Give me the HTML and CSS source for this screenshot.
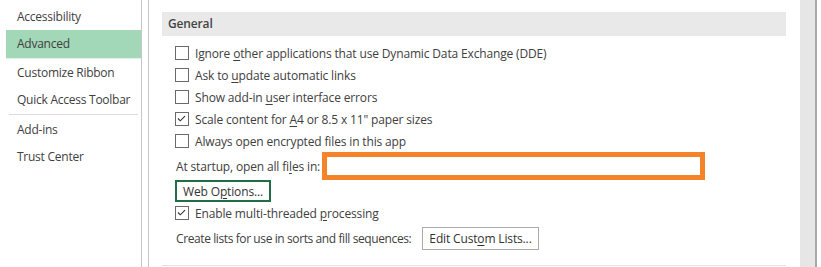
FILE: index.html
```html
<!DOCTYPE html>
<html lang="en">
<head>
<meta charset="utf-8">
<title>Excel Options - Advanced</title>
<link rel="stylesheet" href="styles.css">
</head>
<body>
<div class="window">
  <nav class="nav">
    <div class="nav-item">Accessibility</div>
    <div class="nav-item active">Advanced</div>
    <div class="nav-item">Customize Ribbon</div>
    <div class="nav-item">Quick Access Toolbar</div>
    <div class="nav-sep"></div>
    <div class="nav-item">Add-ins</div>
    <div class="nav-item">Trust Center</div>
  </nav>
  <main class="main">
    <div class="section-head">General</div>
    <div class="opts">
      <label class="row"><span class="cb"></span><span>Ignore <u>o</u>ther applications that use Dynamic Data Exchange (DDE)</span></label>
      <label class="row"><span class="cb"></span><span>Ask to <u>u</u>pdate automatic links</span></label>
      <label class="row"><span class="cb"></span><span>Show add-in <u>u</u>ser interface errors</span></label>
      <label class="row"><span class="cb checked"><svg viewBox="0 0 13 13" width="13" height="13"><path d="M3 6.5 L5.3 8.8 L10 4.1" fill="none" stroke="#333" stroke-width="1.1"/></svg></span><span>Scale content for <u>A</u>4 or 8.5 x 11" paper sizes</span></label>
      <label class="row"><span class="cb"></span><span>Always open encrypted files in this app</span></label>
      <div class="row startup"><span class="startup-label">At startup, open all fi<u>l</u>es in:</span><span class="path-box"></span></div>
      <div class="row btn-row"><button class="btn btn-focus">Web O<u>p</u>tions...</button></div>
      <label class="row"><span class="cb checked"><svg viewBox="0 0 13 13" width="13" height="13"><path d="M3 6.5 L5.3 8.8 L10 4.1" fill="none" stroke="#333" stroke-width="1.1"/></svg></span><span>Enable multi-threaded <u>p</u>rocessing</span></label>
      <div class="row lists"><span class="lists-label">Create lists for use in sorts and fill sequences:</span><button class="btn btn-plain">Edit Cust<u>o</u>m Lists...</button></div>
    </div>
    <div class="section-end"></div>
  </main>
  <div class="scrollbar"></div>
</div>
</body>
</html>
```
FILE: styles.css
```css
html, body {
  margin: 0;
  padding: 0;
  background: #ffffff;
}
body {
  font-family: "Open Sans", "Noto Sans", "Liberation Sans", sans-serif;
  font-size: 12px;
  letter-spacing: -0.15px;
  color: #404040;
}
.window {
  display: flex;
  height: 267px;
  overflow: hidden;
}
.nav {
  width: 141px;
  flex: none;
  border-right: 1px solid #c6c6c6;
  padding-top: 3px;
  box-sizing: content-box;
  letter-spacing: -0.25px;
}
.nav-item {
  height: 27px;
  line-height: 27px;
  padding-left: 17px;
  white-space: nowrap;
}
.nav-item.active {
  margin-left: 6px;
  padding-left: 11px;
  height: 28px;
  line-height: 28px;
  background: #a2d7b7;
  border-bottom: 1px solid #e4efe8;
}
.nav-sep {
  height: 1px;
  background: #dcdcdc;
  margin: 1px 3px 1px 9px;
}
.main {
  flex: none;
  width: 624px;
  margin-left: 6px;
  border-left: 1px solid #c6c6c6;
  padding: 12px 14px 0 13px;
}
.section-head {
  height: 24px;
  line-height: 23px;
  background: #e9e9e9;
  padding-left: 6px;
  font-weight: 600;
  color: #444444;
}
.opts {
  display: flex;
  flex-direction: column;
  padding-left: 13px;
  margin-top: 6px;
}
.row {
  display: flex;
  align-items: center;
  height: 22px;
  white-space: nowrap;
}
.row u {
  text-decoration-thickness: 1px;
  text-underline-offset: 2px;
}
.cb {
  width: 12px;
  height: 12px;
  border: 1px solid #6a6a6a;
  margin-right: 6px;
  flex: none;
  position: relative;
  background: #fff;
}
.cb svg {
  position: absolute;
  left: -1px;
  top: -1px;
}
.startup {
  height: 28px;
  padding-left: 1px;
}
.startup-label {
  width: 146px;
  flex: none;
}
.path-box {
  width: 373px;
  height: 18px;
  border: 5px solid #f5832a;
  flex: none;
}
.btn {
  font: inherit;
  letter-spacing: inherit;
  color: #333333;
  background: #ffffff;
  cursor: default;
  padding: 0;
}
.btn-focus {
  width: 96px;
  height: 22px;
  border: 2px solid #1f6e46;
}
.lists {
  margin-top: 3px;
  height: 23px;
  padding-left: 1px;
}
.lists-label {
  width: 246px;
  flex: none;
  letter-spacing: -0.4px;
}
.btn-plain {
  width: 117px;
  height: 23px;
  border: 1px solid #ababab;
}
.section-end {
  margin-top: 15px;
  height: 1px;
  background: #e3e3e3;
}
.scrollbar {
  flex: none;
  width: 15px;
  background: #e6e6e6;
  border-right: 2px solid #a8a8a8;
}
```
